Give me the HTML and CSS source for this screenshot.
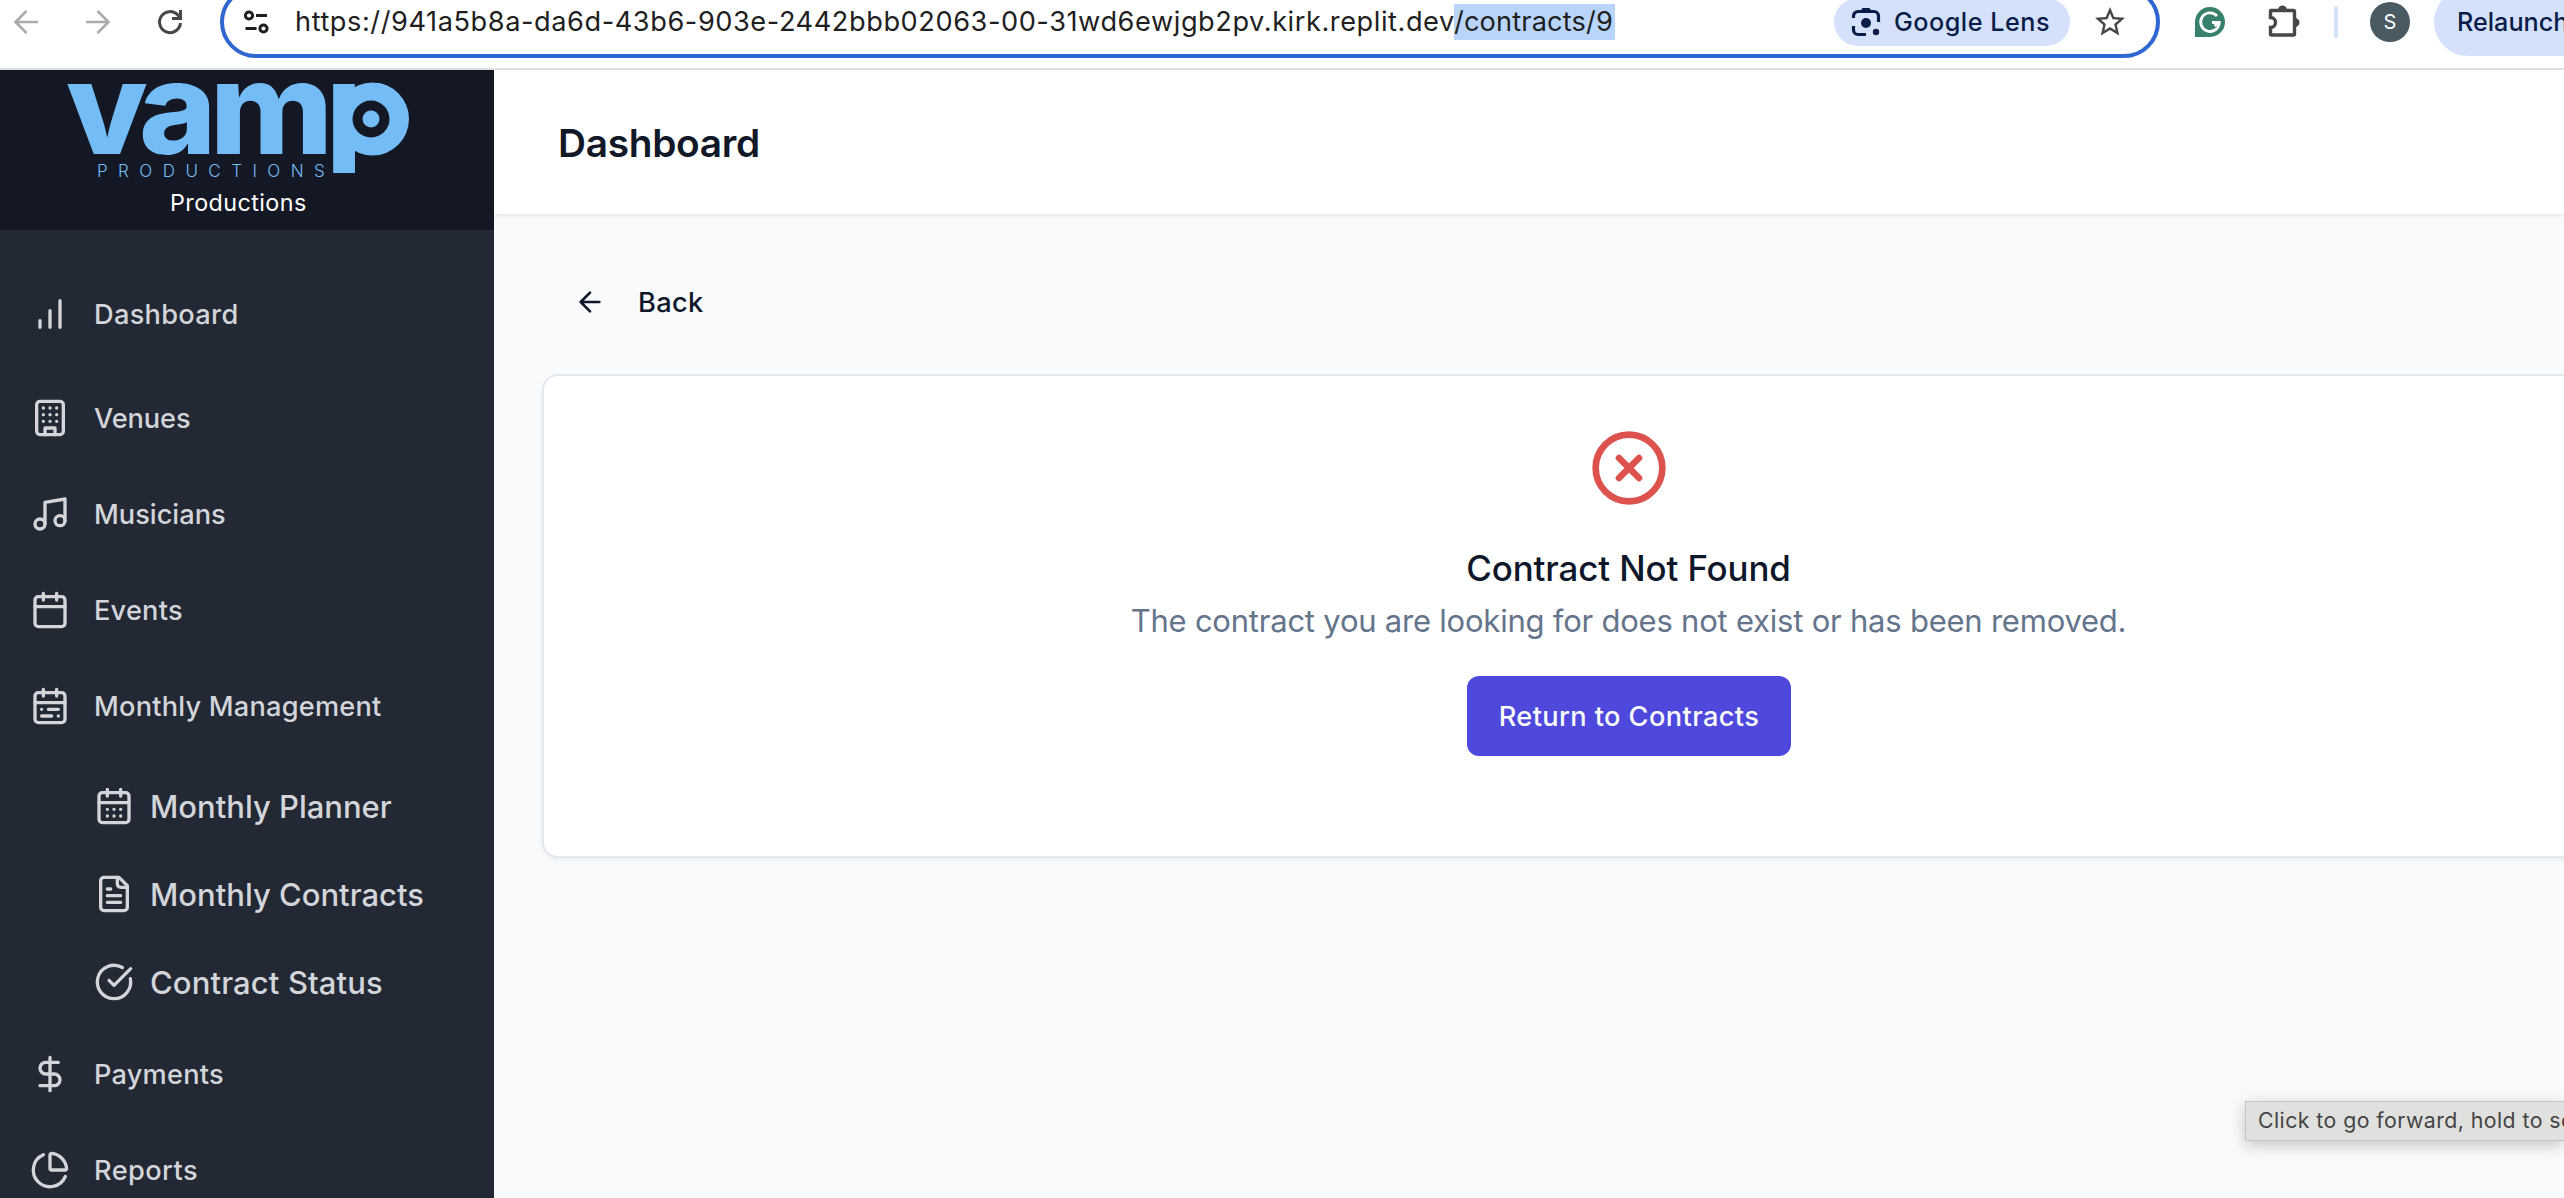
FILE: index.html
```html
<!DOCTYPE html>
<html lang="en">
<head>
<meta charset="utf-8">
<title>Contract Not Found</title>
<link rel="stylesheet" href="styles.css">
</head>
<body>
<div class="toolbar">
  <div class="nav-buttons">
    <svg class="nav-arrow" viewBox="0 0 24 24"><path d="M24 12H2M12.500 1 1.500 12l11 11"/></svg>
    <svg class="nav-arrow" viewBox="0 0 24 24"><path d="M0 12h22M11.500 1l11 11-11 11"/></svg>
    <svg class="nav-reload" viewBox="0 0 24 24"><path d="M22.500 13A10.500 10.500 0 1 1 19.600 4.800L22 7.500M22.500 0v8.500H14"/></svg>
  </div>
  <div class="omnibox">
    <svg class="tune" viewBox="0 0 28 26"><circle cx="6" cy="6.500" r="3.600"/><circle cx="20.500" cy="19.500" r="3.600"/><path d="M13 6.500h11M2.500 19.500h11"/></svg>
    <div class="url"><span class="host">https://941a5b8a-da6d-43b6-903e-2442bbb02063-00-31wd6ewjgb2pv.kirk.replit.dev</span><span class="selected">/contracts/9</span></div>
    <div class="lens">
      <svg viewBox="0 0 30 30"><path d="M2.500 11V9a4.500 4.500 0 0 1 4.500-4.500h16A4.500 4.500 0 0 1 27.500 9v6M2.500 19v4a4.500 4.500 0 0 0 4.500 4.500h8"/><path class="dot" d="M9.500 4l2-3h7l2 3z"/><circle class="dot" cx="15" cy="16" r="5"/><circle class="dot" cx="25" cy="25" r="3.200"/></svg>
      <span>Google Lens</span>
    </div>
    <svg class="star" viewBox="0 0 24 24"><path d="M22 9.240l-7.190-.620L12 2 9.190 8.630 2 9.240l5.460 4.730L5.820 21 12 17.270 18.180 21l-1.630-7.030L22 9.240zM12 15.400l-3.760 2.270 1-4.280-3.320-2.880 4.380-.380L12 6.100l1.710 4.040 4.380.380-3.320 2.880 1 4.280L12 15.400z"/></svg>
  </div>
  <div class="extensions">
    <svg class="grammarly" viewBox="0 0 30 30"><path class="g-bg" d="M15 0a15 15 0 1 1 0 30H0V15A15 15 0 0 1 15 0z"/><path class="g-line" d="M22 9A9.300 9.300 0 1 0 24.300 15.500H17M19.500 19l4.500-3.500"/></svg>
    <svg class="puzzle" viewBox="0 0 34 34"><path d="M4 7.500h22.500a1 1 0 0 1 1 1V31a1 1 0 0 1-1 1H4.500a1 1 0 0 1-1-1v-6.500a5 5 0 0 0 0-10V8z"/><path class="tab" d="M11 7a4.500 4.500 0 0 1 9 0zM28 15a4.500 4.500 0 0 1 0 9z"/></svg>
    <span class="divider"></span>
    <span class="avatar">S</span>
  </div>
  <div class="relaunch">Relaunch</div>
</div>
<div class="app">
  <aside class="sidebar">
    <div class="brand">
      <svg class="logo" viewBox="0 0 346 102">
        <defs><clipPath id="stem"><rect x="260" y="0" width="86" height="98"/></clipPath></defs>
        <g class="wordmark">
          <text transform="translate(-1 79) scale(1.040 1)">v</text>
          <text transform="translate(72 79) scale(1.030 1)">a</text>
          <text transform="translate(142.700 79) scale(1.040 1)">m</text>
          <g clip-path="url(#stem)"><text x="259" y="79">p</text></g>
          <circle cx="305.500" cy="44" r="36.500"/>
        </g>
        <circle class="disc-hole" cx="304" cy="44" r="18.500"/>
        <circle class="disc-dot" cx="304" cy="44" r="8.500"/>
        <text class="tagline" x="30" y="102">PRODUCTIONS</text>
      </svg>
      <div class="brand-name">Productions</div>
    </div>
    <nav class="menu">
      <a class="item first"><svg viewBox="0 0 24 24"><path d="M12 20V10M18 20V4M6 20v-4"/></svg><span class="t-dashboard">Dashboard</span></a>
      <a class="item"><svg viewBox="0 0 24 24"><rect width="16" height="20" x="4" y="2" rx="2"/><path d="M9 22v-4h6v4M8 6h.01M16 6h.01M12 6h.01M12 10h.01M12 14h.01M16 10h.01M16 14h.01M8 10h.01M8 14h.01"/></svg><span class="t-venues">Venues</span></a>
      <a class="item"><svg viewBox="0 0 24 24"><path d="M9 18V5l12-2v13"/><circle cx="6" cy="18" r="3"/><circle cx="18" cy="16" r="3"/></svg><span class="t-musicians">Musicians</span></a>
      <a class="item"><svg viewBox="0 0 24 24"><path d="M8 2v4M16 2v4M3 10h18"/><rect width="18" height="18" x="3" y="4" rx="2"/></svg><span>Events</span></a>
      <a class="item"><svg viewBox="0 0 24 24"><rect width="18" height="18" x="3" y="4" rx="2"/><path d="M16 2v4M3 10h18M8 2v4M17 14h-6M13 18H7M7 14h.01M17 18h.01"/></svg><span>Monthly Management</span></a>
      <div class="submenu">
        <a class="item"><svg viewBox="0 0 24 24"><path d="M8 2v4M16 2v4M3 10h18M8 14h.01M12 14h.01M16 14h.01M8 18h.01M12 18h.01M16 18h.01"/><rect width="18" height="18" x="3" y="4" rx="2"/></svg><span>Monthly Planner</span></a>
        <a class="item"><svg viewBox="0 0 24 24"><path d="M15 2H6a2 2 0 0 0-2 2v16a2 2 0 0 0 2 2h12a2 2 0 0 0 2-2V7Z"/><path d="M14 2v4a2 2 0 0 0 2 2h4M10 9H8M16 13H8M16 17H8"/></svg><span>Monthly Contracts</span></a>
        <a class="item"><svg viewBox="0 0 24 24"><path d="M21.801 10A10 10 0 1 1 17 3.335"/><path d="m9 11 3 3L22 4"/></svg><span class="t-status">Contract Status</span></a>
      </div>
      <a class="item"><svg viewBox="0 0 24 24"><path d="M12 2v20M17 5H9.500a3.500 3.500 0 0 0 0 7h5a3.500 3.500 0 0 1 0 7H6"/></svg><span>Payments</span></a>
      <a class="item"><svg viewBox="0 0 24 24"><path d="M21 12c.552 0 1.005-.449.950-.998a10 10 0 0 0-8.953-8.951c-.550-.055-.998.398-.998.950v8a1 1 0 0 0 1 1z"/><path d="M21.210 15.890A10 10 0 1 1 8 2.830"/></svg><span class="t-reports">Reports</span></a>
    </nav>
  </aside>
  <main class="main">
    <header class="page-header"><h1>Dashboard</h1></header>
    <section class="content">
      <a class="back"><svg viewBox="0 0 24 24"><path d="m12 19-7-7 7-7M19 12H5"/></svg><span>Back</span></a>
      <div class="card">
        <svg class="error-icon" viewBox="0 0 24 24"><circle cx="12" cy="12" r="10"/><path d="m15 9-6 6M9 9l6 6"/></svg>
        <h2>Contract Not Found</h2>
        <p>The contract you are looking for does not exist or has been removed.</p>
        <button class="return">Return to Contracts</button>
      </div>
    </section>
  </main>
</div>
<div class="tooltip">Click to go forward, hold to see history</div>
</body>
</html>
```
FILE: styles.css
```css
* { box-sizing: border-box; }
html, body { height: 100%; }
body {
  margin: 0;
  display: flex;
  flex-direction: column;
  overflow: hidden;
  background: #fff;
  font-family: Inter, "Liberation Sans", sans-serif;
}
svg { display: block; flex: none; fill: none; stroke: currentColor; overflow: visible; }

/* Browser toolbar */
.toolbar {
  display: flex;
  flex: none;
  height: 70px;
  border-bottom: 2px solid #dfdfdf;
  overflow: hidden;
  white-space: nowrap;
}
.nav-buttons {
  display: flex;
  align-items: center;
  flex: none;
  gap: 48px;
  width: 220px;
  height: 44px;
  padding-left: 14px;
}
.nav-arrow { width: 24px; height: 24px; color: #ababab; stroke-width: 2.6; }
.nav-reload { width: 24px; height: 24px; color: #474747; stroke-width: 3; }
.omnibox {
  display: flex;
  align-items: center;
  flex: none;
  width: 1940px;
  height: 72px;
  margin-top: -14px;
  padding-left: 19px;
  border: 4px solid #2f66cf;
  border-radius: 36px;
  color: #1f1f1f;
}
.tune { width: 28px; height: 26px; stroke-width: 3; }
.url { display: flex; flex: none; width: 1320px; margin-left: 24px; font-size: 27.2px; line-height: 36px; }
.host { width: 1159px; letter-spacing: 0.555px; }
.selected { width: 162px; background: #b9d5fb; letter-spacing: 0.146px; }
.lens {
  display: flex;
  align-items: center;
  flex: none;
  gap: 13px;
  width: 236px;
  height: 48px;
  margin-left: 219px;
  padding-left: 17px;
  border-radius: 24px;
  background: #d5e1fb;
  color: #0a1d48;
  font-size: 25.2px;
  font-weight: 500;
  letter-spacing: 0.5px;
}
.lens svg { width: 30px; height: 30px; stroke-width: 3.2; }
.lens .dot { fill: currentColor; stroke: none; }
.star { width: 36px; height: 36px; margin-left: 22px; }
.star path { fill: #474747; stroke: none; }
.extensions { display: flex; align-items: center; flex: none; width: 274px; height: 44px; padding-left: 35px; }
.grammarly { width: 30px; height: 30px; }
.g-bg { fill: #37806b; stroke: none; }
.g-line { stroke: #fff; stroke-width: 2.8; }
.puzzle { width: 34px; height: 34px; margin: -5px 0 0 42px; color: #474747; stroke-width: 3.4; }
.puzzle .tab { fill: currentColor; stroke: none; }
.divider { width: 4px; height: 32px; margin: -1px 0 0 33px; border-radius: 2px; background: #d3e1fb; }
.avatar {
  width: 40px;
  height: 40px;
  margin-left: 32px;
  border-radius: 50%;
  background: #4a5a63;
  color: #fff;
  font-size: 20px;
  line-height: 40px;
  text-align: center;
}
.relaunch {
  flex: none;
  width: 320px;
  height: 68px;
  margin-top: -12px;
  padding-left: 23px;
  border-radius: 34px;
  background: #d5e1fb;
  color: #0a1d48;
  font-size: 25.2px;
  font-weight: 500;
  line-height: 69px;
}

/* Application shell */
.app { display: flex; flex: 1; min-height: 0; }
.sidebar {
  flex: none;
  width: 494px;
  overflow: hidden;
  background: #222834;
  color: #d2d5da;
}
.brand {
  height: 160px;
  padding: 5px 0 0 67px;
  background: #131824;
}
.logo { width: 346px; height: 102px; }
.wordmark { fill: #74bcf6; stroke: none; font-size: 128px; font-weight: 800; }
.disc-hole { fill: #131824; stroke: none; }
.disc-dot { fill: #74bcf6; stroke: none; }
.tagline { fill: #74bcf6; stroke: none; font-size: 17px; font-weight: 300; letter-spacing: 10.45px; }
.brand-name {
  margin: 10px 0 0 103px;
  color: #fff;
  font-size: 23.3px;
  line-height: 32px;
  letter-spacing: 0.44px;
}
.menu { display: flex; flex-direction: column; gap: 8px; padding: 40px 30px; }
.item {
  display: flex;
  align-items: center;
  flex: none;
  height: 88px;
  gap: 24px;
  font-size: 27.2px;
  font-weight: 500;
  letter-spacing: 0.21px;
  white-space: nowrap;
}
.item svg { width: 40px; height: 40px; stroke-width: 2; stroke-linecap: round; stroke-linejoin: round; }
.item.first { margin-bottom: 8px; }
.submenu { display: flex; flex-direction: column; gap: 8px; padding: 8px 0 0 64px; }
.submenu .item { height: 80px; gap: 16px; font-size: 31px; letter-spacing: 0; }
.submenu .t-status { letter-spacing: 0.12px; }
.item .t-dashboard { letter-spacing: 0.3px; }
.item .t-venues { letter-spacing: -0.1px; }
.item .t-musicians { letter-spacing: 0; }
.item .t-reports { letter-spacing: 0.42px; }

/* Page */
.main { display: flex; flex-direction: column; flex: 1; min-width: 0; overflow: hidden; background: #f9fafc; }
.page-header {
  display: flex;
  align-items: center;
  flex: none;
  height: 144px;
  padding-left: 64px;
  background: #fff;
  box-shadow: 0 2px 4px rgba(0, 0, 0, 0.08);
}
h1, h2, p { margin: 0; }
h1 { color: #111827; font-size: 38.8px; font-weight: 600; letter-spacing: -0.3px; }
.content { display: flex; flex-direction: column; padding: 48px; }
.back {
  display: flex;
  align-items: center;
  gap: 32px;
  height: 80px;
  margin-bottom: 32px;
  padding-left: 32px;
  color: #0f172a;
  font-size: 27.2px;
  font-weight: 500;
  letter-spacing: 0.34px;
}
.back svg { width: 32px; height: 32px; stroke-width: 2; stroke-linecap: round; stroke-linejoin: round; }
.card {
  display: flex;
  flex-direction: column;
  align-items: center;
  flex: none;
  width: 2173px;
  height: 484px;
  padding-top: 52px;
  border: 2px solid #e2e8f0;
  border-radius: 16px;
  background: #fff;
  box-shadow: 0 2px 4px rgba(0, 0, 0, 0.05);
}
.error-icon { width: 80px; height: 80px; color: #dd524c; stroke-width: 2; stroke-linecap: round; }
h2 {
  margin-top: 32px;
  color: #0f172a;
  font-size: 34.9px;
  font-weight: 500;
  line-height: 56px;
  letter-spacing: -0.117px;
}
.card p { color: #64748b; font-size: 31px; line-height: 50px; letter-spacing: -0.222px; }
.return {
  width: 324px;
  height: 80px;
  margin-top: 30px;
  padding: 0 0 0 1px;
  border: 0;
  border-radius: 12px;
  background: #4f48dc;
  color: #f8fafc;
  font: 500 27.2px Inter, "Liberation Sans", sans-serif;
  letter-spacing: 0.4px;
}

/* Native tooltip floating over the page */
.tooltip {
  position: absolute;
  left: 2245px;
  top: 1101px;
  width: 319px;
  height: 40px;
  padding-left: 12px;
  overflow: hidden;
  border: 1px solid #c4c6c6;
  border-right: 0;
  background: #e0e0de;
  box-shadow: 0 4px 16px rgba(0, 0, 0, 0.22);
  color: #444;
  font-size: 21.3px;
  line-height: 37px;
  letter-spacing: 0.44px;
  white-space: nowrap;
}
```
